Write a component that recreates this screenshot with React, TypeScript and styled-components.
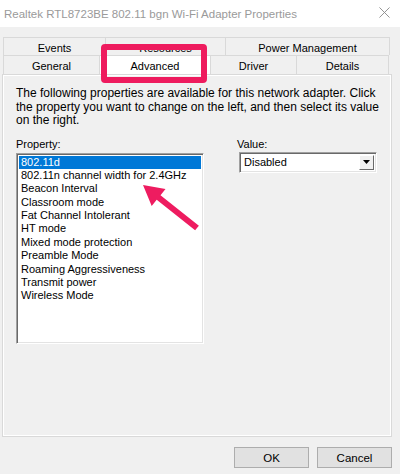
import React from 'react';
import styled, { createGlobalStyle } from 'styled-components';

const GlobalStyle = createGlobalStyle`
  html, body {
    margin: 0;
    padding: 0;
    background: #f0f0f0;
  }
  * {
    box-sizing: border-box;
  }
`;

const properties = [
  '802.11d',
  '802.11n channel width for 2.4GHz',
  'Beacon Interval',
  'Classroom mode',
  'Fat Channel Intolerant',
  'HT mode',
  'Mixed mode protection',
  'Preamble Mode',
  'Roaming Aggressiveness',
  'Transmit power',
  'Wireless Mode',
];

const topTabs = [
  { label: 'Events', width: 103 },
  { label: 'Resources', width: 121 },
  { label: 'Power Management', width: 165 },
];

const bottomTabs = [
  { label: 'General', width: 97 },
  { label: 'Advanced', width: 112, active: true },
  { label: 'Driver', width: 87 },
  { label: 'Details', width: 93 },
];

const AdvancedTab = () => {
  return (
    <Window>
      <GlobalStyle />
      <TitleBar>
        <Title>Realtek RTL8723BE 802.11 bgn Wi-Fi Adapter Properties</Title>
        <CloseIcon viewBox="0 0 12 12" width={11} height={11}>
          <path d="M0.5 0.5 L11.5 11.5 M11.5 0.5 L0.5 11.5" stroke="#8a8a8a" strokeWidth="1" fill="none" />
        </CloseIcon>
      </TitleBar>

      <Body>
        <TabStrip>
          <TabRow $top>
            {topTabs.map((t) => (
              <Tab key={t.label} $width={t.width}>
                {t.label}
              </Tab>
            ))}
          </TabRow>
          <TabRow>
            {bottomTabs.map((t) => (
              <Tab key={t.label} $width={t.width} $active={t.active}>
                {t.label}
              </Tab>
            ))}
          </TabRow>
        </TabStrip>

        <Panel>
          <Intro>
            The following properties are available for this network adapter. Click
            <br />
            the property you want to change on the left, and then select its value
            <br />
            on the right.
          </Intro>

          <Columns>
            <PropertyColumn>
              <FieldLabel>Property:</FieldLabel>
              <ListBox>
                {properties.map((p, i) => (
                  <ListItem key={p} $selected={i === 0}>
                    {p}
                  </ListItem>
                ))}
              </ListBox>
            </PropertyColumn>

            <ValueColumn>
              <FieldLabel>Value:</FieldLabel>
              <Select>
                <SelectText>Disabled</SelectText>
                <SelectButton>
                  <svg width="7" height="4" viewBox="0 0 7 4">
                    <path d="M0 0 H7 L3.5 4 Z" fill="#000" />
                  </svg>
                </SelectButton>
              </Select>
            </ValueColumn>
          </Columns>
        </Panel>

        <Footer>
          <DialogButton>OK</DialogButton>
          <DialogButton>Cancel</DialogButton>
        </Footer>
      </Body>

      {/* annotation overlays */}
      <Highlight />
      <Arrow viewBox="0 0 400 474" width={400} height={474}>
        <polygon
          points="143,185 165.5,188.9 160.5,195.2 198.9,225.7 195.1,230.3 156.7,199.8 151.7,206.1"
          fill="#ee1c60"
        />
      </Arrow>
    </Window>
  );
};

const Window = styled.div`
  position: relative;
  width: 400px;
  height: 474px;
  background: #f0f0f0;
  font-family: 'Liberation Sans', Arial, sans-serif;
  font-size: 11px;
  color: #000;
  overflow: hidden;
`;

const TitleBar = styled.div`
  height: 27px;
  background: #fff;
  display: flex;
  align-items: center;
  justify-content: space-between;
  padding: 0 10px 0 4px;
`;

const Title = styled.div`
  font-size: 11.5px;
  color: #9a9a9a;
  white-space: nowrap;
`;

const CloseIcon = styled.svg`
  display: block;
  margin-top: -2px;
`;

const Body = styled.div`
  padding: 10px 8px 0 2px;
  display: flex;
  flex-direction: column;
`;

const TabStrip = styled.div`
  display: flex;
  flex-direction: column;
  padding-left: 1px;
`;

const TabRow = styled.div<{ $top?: boolean }>`
  display: flex;
  height: ${(p) => (p.$top ? 18 : 19)}px;
  padding-top: 0;

  & > div {
    padding-top: ${(p) => (p.$top ? 3 : 1)}px;
  }
`;

const Tab = styled.div<{ $width: number; $active?: boolean }>`
  width: ${(p) => p.$width}px;
  display: flex;
  align-items: center;
  justify-content: center;
  border: 1px solid #d9d9d9;
  border-bottom: none;
  margin-left: -1px;
  background: ${(p) => (p.$active ? '#fff' : '#f0f0f0')};
  white-space: nowrap;

  &:first-child {
    margin-left: 0;
  }
`;

const Panel = styled.div`
  height: 363px;
  border: 1px solid #d9d9d9;
  box-shadow: inset 1px 1px 0 #fff, inset -1px -1px 0 #fff;
  padding: 12px 13px 0 13px;
  display: flex;
  flex-direction: column;
`;

const Intro = styled.p`
  margin: 0;
  font-size: 12px;
  line-height: 13.5px;
  white-space: nowrap;
`;

const Columns = styled.div`
  display: flex;
  margin-top: 9px;
`;

const PropertyColumn = styled.div`
  display: flex;
  flex-direction: column;
  width: 188px;
`;

const ValueColumn = styled.div`
  display: flex;
  flex-direction: column;
  margin-left: 33px;
`;

const FieldLabel = styled.div`
  line-height: 14px;
  margin-bottom: 2px;
`;

const ListBox = styled.div`
  height: 191px;
  background: #fff;
  border: 1px solid;
  border-color: #a0a0a0 #fff #fff #a0a0a0;
  box-shadow: inset 1px 1px 0 #696969, inset -1px -1px 0 #e3e3e3;
  padding: 2px 2px 0 2px;
`;

const ListItem = styled.div<{ $selected?: boolean }>`
  height: 13.4px;
  line-height: 13.4px;
  padding-left: 2px;
  white-space: nowrap;
  background: ${(p) => (p.$selected ? '#0078d7' : 'transparent')};
  color: ${(p) => (p.$selected ? '#fff' : '#000')};
`;

const Select = styled.div`
  width: 138px;
  height: 21px;
  margin-left: 2px;
  margin-top: -1px;
  display: flex;
  align-items: stretch;
  background: #fff;
  border: 1px solid;
  border-color: #a0a0a0 #fff #fff #a0a0a0;
  box-shadow: inset 1px 1px 0 #696969, inset -1px -1px 0 #e3e3e3;
  padding: 2px;
`;

const SelectText = styled.div`
  flex: 1;
  display: flex;
  align-items: center;
  padding-left: 2px;
`;

const SelectButton = styled.div`
  width: 15px;
  display: flex;
  align-items: center;
  justify-content: center;
  background: #f0f0f0;
  border: 1px solid;
  border-color: #fff #696969 #696969 #fff;
`;

const Footer = styled.div`
  display: flex;
  justify-content: flex-end;
  gap: 8px;
  margin-top: 10px;
  padding-right: 0;
`;

const DialogButton = styled.button`
  width: 75px;
  height: 21px;
  font-family: inherit;
  font-size: 11.5px;
  color: #000;
  background: #e1e1e1;
  border: 1px solid #adadad;
  padding: 0;
`;

const Highlight = styled.div`
  position: absolute;
  left: 101px;
  top: 44px;
  width: 106px;
  height: 39px;
  border: 6px solid #ee1b5e;
  border-radius: 4px;
  pointer-events: none;
`;

const Arrow = styled.svg`
  position: absolute;
  left: 0;
  top: 0;
  pointer-events: none;
`;

export default AdvancedTab;
